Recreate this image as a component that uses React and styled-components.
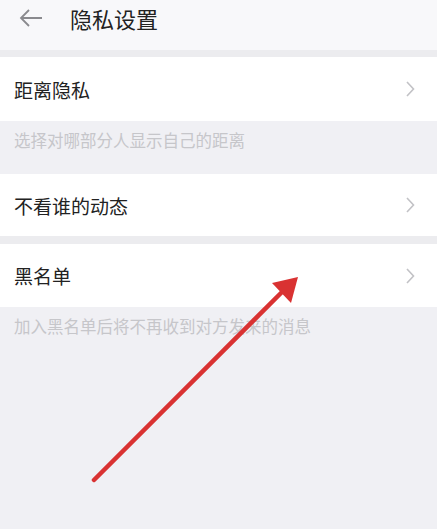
import React from 'react';
import styled, { createGlobalStyle } from 'styled-components';

const GlobalStyle = createGlobalStyle`
    html, body {
        margin: 0;
        padding: 0;
        background: #f0f0f4;
    }
    body {
        font-family: "Noto Sans CJK SC", "Noto Sans", sans-serif;
    }
`;

const Page = styled.div`
    position: relative;
    width: 437px;
    height: 529px;
    overflow: hidden;
    background: #f0f0f4;
    display: flex;
    flex-direction: column;
`;

const TopBar = styled.div`
    height: 57px;
    background: #f8f8fa;
    display: flex;
    align-items: flex-start;
    padding: 4px 0 0 18px;
    box-sizing: border-box;
    border-bottom: 7px solid #ececef;
`;

const BackIcon = styled.svg`
    width: 26px;
    height: 26px;
    margin-right: 26px;
    margin-top: 1px;
`;

const Title = styled.div`
    font-size: 22px;
    line-height: 28px;
    color: #222;
`;

const Row = styled.div`
    height: ${p => p.h}px;
    background: #fff;
    display: flex;
    align-items: center;
    justify-content: space-between;
    padding: 0 20px 0 14px;
    font-size: 19px;
    color: #222;
`;

const Hint = styled.div`
    height: ${p => p.h}px;
    padding: 9px 14px 0;
    box-sizing: border-box;
    font-size: 16.5px;
    line-height: 20px;
    color: #c6c6ca;
    background: #f0f0f4;
`;

const Divider = styled.div`
    height: 8px;
    background: #ececef;
`;

const Chevron = styled.svg`
    width: 14px;
    height: 18px;
`;

const Arrow = styled.svg`
    position: absolute;
    left: 0;
    top: 0;
    width: 437px;
    height: 529px;
    pointer-events: none;
`;

const ChevronIcon = () => (
    <Chevron viewBox="0 0 14 18">
        <path d="M4 2 L10.5 9 L4 16" fill="none" stroke="#c2c2c6" strokeWidth="1.6" />
    </Chevron>
);

export default function App() {
    return (
        <>
            <GlobalStyle />
            <Page>
                <TopBar>
                    <BackIcon viewBox="0 0 26 26">
                        <path d="M24 13 H3 M11 5 L3 13 L11 21" fill="none" stroke="#8a8a8e" strokeWidth="1.8" />
                    </BackIcon>
                    <Title>隐私设置</Title>
                </TopBar>
                <Row h={64}>
                    <span>距离隐私</span>
                    <ChevronIcon />
                </Row>
                <Hint h={53}>选择对哪部分人显示自己的距离</Hint>
                <Row h={62}>
                    <span>不看谁的动态</span>
                    <ChevronIcon />
                </Row>
                <Divider />
                <Row h={63}>
                    <span>黑名单</span>
                    <ChevronIcon />
                </Row>
                <Hint h={60}>加入黑名单后将不再收到对方发来的消息</Hint>
                <Arrow viewBox="0 0 437 529">
                    <line x1="94" y1="480" x2="282" y2="292" stroke="#d93232" strokeWidth="4.5" strokeLinecap="round" />
                    <polygon points="298,277 291,303 272,283" fill="#d93232" />
                </Arrow>
            </Page>
        </>
    );
}
